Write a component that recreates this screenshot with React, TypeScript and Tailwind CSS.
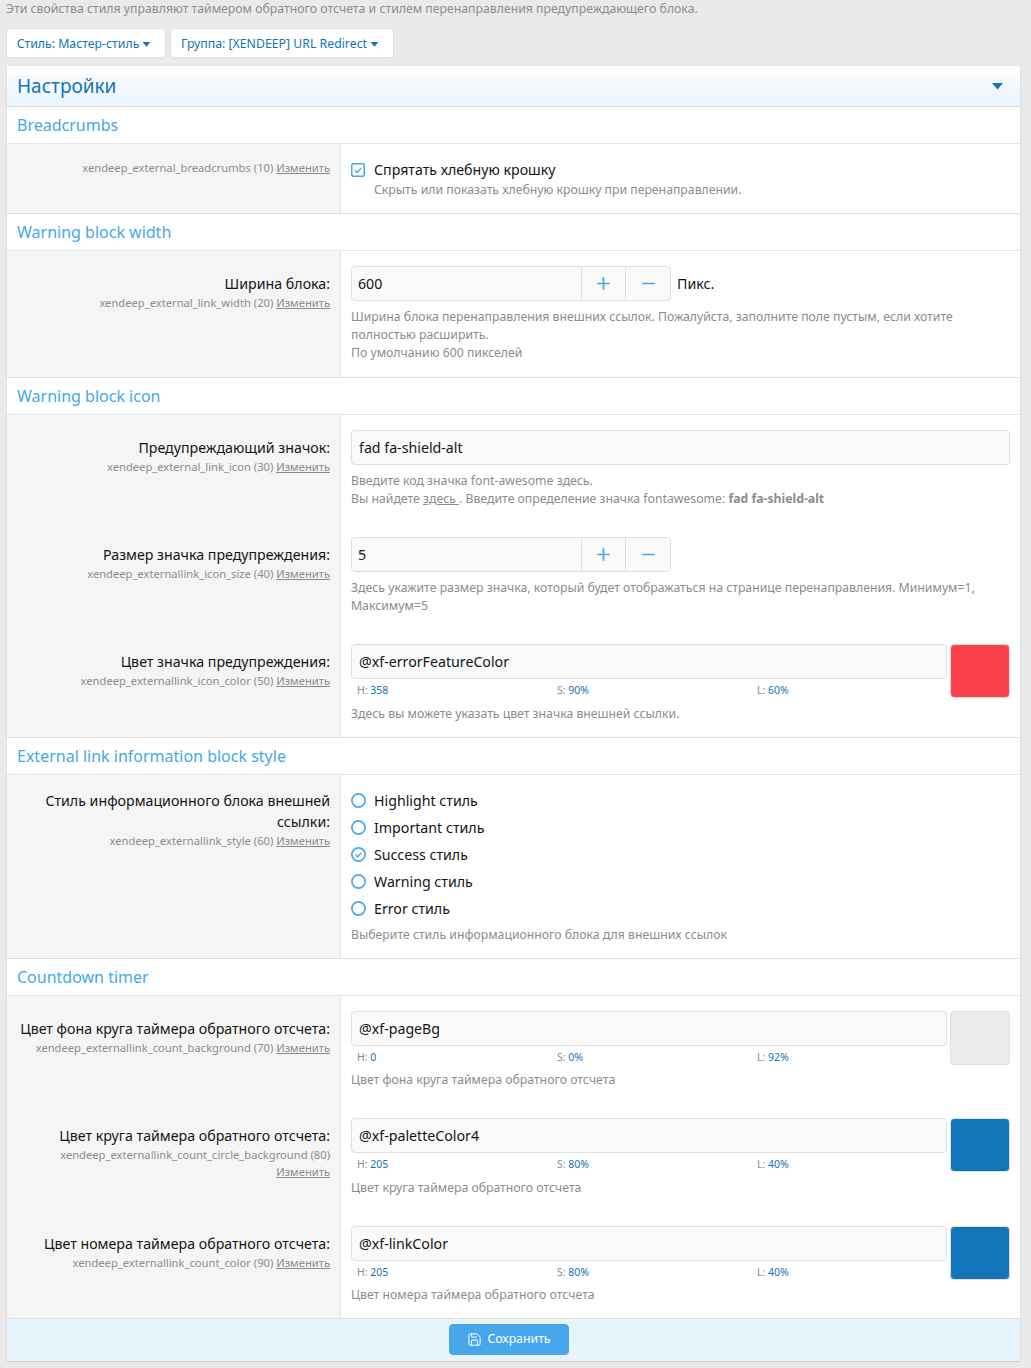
import { Minus, Plus, Save } from "lucide-react";

function Caret({ className }: { className: string }) {
  return (
    <svg viewBox="0 0 10 6" className={className} fill="currentColor">
      <path d="M0.3 0h9.4L5 5.6z" />
    </svg>
  );
}

function Heading({ children }: { children: string }) {
  return (
    <h3 className="h-[37px] border-b border-[#e6e6e6] bg-white pl-[10px] text-[16px] leading-[36px] text-[#47a7eb]">
      {children}
    </h3>
  );
}

function Hint({ name, order, wrap }: { name: string; order: number; wrap?: boolean }) {
  return (
    <div className="text-[11.2px] leading-[17px] text-[#8c8c8c]">
      {name} ({order}) {wrap && <br />}
      <a className="underline">Изменить</a>
    </div>
  );
}

function Row({
  label,
  name,
  order,
  wrap,
  pad = "pt-[22px]",
  children,
}: {
  label?: string;
  name: string;
  order: number;
  wrap?: boolean;
  pad?: string;
  children: React.ReactNode;
}) {
  return (
    <div className="grid grid-cols-[333px_minmax(0,1fr)]">
      <div className={`bg-[#f5f5f5] pr-[10px] text-right ${pad}`}>
        {label && <div className="text-[14.2px] leading-[21px] text-[#141414]">{label}</div>}
        <Hint name={name} order={order} wrap={wrap} />
      </div>
      <div className="border-l border-[#e6e6e6] bg-white pl-[10px] pr-[10px]">{children}</div>
    </div>
  );
}

function TextBox({ value, className }: { value: string; className?: string }) {
  return (
    <input
      readOnly
      value={value}
      className={`h-[35px] rounded-[4px] border border-[#dfdfdf] bg-[#fafafa] px-[7px] pb-[1px] text-[14.2px] text-[#141414] outline-none ${className}`}
    />
  );
}

function Spinner({ value, unit }: { value: string; unit?: string }) {
  return (
    <div className="flex items-center">
      <div className="flex h-[35px] w-[320px] rounded-[4px] border border-[#dfdfdf] bg-[#fafafa]">
        <input readOnly value={value} className="min-w-0 flex-1 bg-transparent px-[6px] text-[14.2px] text-[#141414] outline-none" />
        <button className="flex w-[44px] items-center justify-center border-l border-[#dfdfdf] text-[#47a7eb]">
          <Plus size={19} strokeWidth={2.2} />
        </button>
        <button className="flex w-[45px] items-center justify-center border-l border-[#dfdfdf] text-[#47a7eb]">
          <Minus size={19} strokeWidth={2.2} />
        </button>
      </div>
      {unit && <span className="ml-[6px] text-[14.2px] text-[#141414]">{unit}</span>}
    </div>
  );
}

function Desc({ children, className = "" }: { children: React.ReactNode; className?: string }) {
  return <div className={`text-[12.25px] leading-[18px] text-[#8c8c8c] ${className}`}>{children}</div>;
}

function ColorField({ value, swatch, h, s, l }: { value: string; swatch: string; h: string; s: string; l: string }) {
  return (
    <div className="flex gap-[3px]">
      <div className="min-w-0 flex-1">
        <TextBox value={value} className="w-full" />
        <div className="mt-[3px] grid grid-cols-[200px_200px_200px] pl-[6px] text-[10.5px] leading-[16px] text-[#8c8c8c]">
          <div>H: <span className="text-[#1474b8]">{h}</span></div>
          <div>S: <span className="text-[#1474b8]">{s}</span></div>
          <div>L: <span className="text-[#1474b8]">{l}</span></div>
        </div>
      </div>
      <div className={`h-[54px] w-[60px] rounded-[4px] border border-[#dfdfdf] ${swatch}`} />
    </div>
  );
}

function Radio({ label, checked }: { label: string; checked?: boolean }) {
  return (
    <div className="flex h-[27px] items-center gap-[8px] text-[14.2px] text-[#141414]">
      <svg viewBox="0 0 15 15" className="h-[15px] w-[15px] text-[#47a7eb]" fill="none" stroke="currentColor">
        <circle cx="7.5" cy="7.5" r="6.6" strokeWidth="1.7" />
        {checked && <path d="M4.5 7.6l2.1 2.1 3.9-4" strokeWidth="1.3" />}
      </svg>
      {label}
    </div>
  );
}

export default function App() {
  return (
    <div className="min-h-[1368px] bg-[#eaeaea] pb-[7px] pl-[6px] pr-[10px] font-['Noto_Sans',sans-serif]">
      <p className="pt-0 text-[12.27px] leading-[18px] text-[#8c8c8c]">
        Эти свойства стиля управляют таймером обратного отсчета и стилем перенаправления предупреждающего блока.
      </p>

      <div className="mt-[10px] flex gap-[4px]">
        <button className="flex h-[30px] w-[160px] items-center justify-center gap-[3px] rounded-[4px] border border-[#dfdfdf] bg-white pr-[4px] pt-[2px] text-[12.3px] text-[#1474b8]">
          Стиль: Мастер-стиль <Caret className="h-[5px] w-[9px]" />
        </button>
        <button className="flex h-[30px] w-[224px] items-center justify-center gap-[3px] rounded-[4px] border border-[#dfdfdf] bg-white pr-[4px] pt-[2px] text-[12.3px] text-[#1474b8]">
          Группа: [XENDEEP] URL Redirect <Caret className="h-[5px] w-[9px]" />
        </button>
      </div>

      <div className="mt-[7px] border-x border-[#dfdfdf]">
        <div className="flex h-[42px] items-center justify-between border-y border-t-[#e6e6e6] border-b-[#d8d8d8] bg-gradient-to-b from-white to-[#e8f4fc] pl-[10px] pr-[16px]">
          <h2 className="text-[19px] text-[#1474b8]">Настройки</h2>
          <Caret className="h-[7px] w-[13px] text-[#1474b8]" />
        </div>

        <Heading>Breadcrumbs</Heading>
        <div className="border-b border-[#dfdfdf]">
          <Row name="xendeep_external_breadcrumbs" order={10} pad="pt-[15px]">
            <div className="h-[69px] pt-[15px]">
              <div className="flex items-center gap-[9px] text-[14.2px] leading-[21px] text-[#141414]">
                <svg viewBox="0 0 14 14" className="h-[14px] w-[14px] text-[#47a7eb]" fill="none" stroke="currentColor">
                  <rect x="0.75" y="0.75" width="12.5" height="12.5" rx="1.5" strokeWidth="1.5" />
                  <path d="M3.8 7.2l2.3 2.3 4.2-4.6" strokeWidth="1.3" />
                </svg>
                Спрятать хлебную крошку
              </div>
              <Desc className="mt-[1px] pl-[23px]">Скрыть или показать хлебную крошку при перенаправлении.</Desc>
            </div>
          </Row>
        </div>

        <Heading>Warning block width</Heading>
        <div className="border-b border-[#dfdfdf]">
          <Row label="Ширина блока:" name="xendeep_external_link_width" order={20}>
            <div className="h-[126px] pt-[15px]">
              <Spinner value="600" unit="Пикс." />
              <Desc className="mt-[7px]">
                Ширина блока перенаправления внешних ссылок. Пожалуйста, заполните поле пустым, если хотите полностью расширить.
                <br />
                По умолчанию 600 пикселей
              </Desc>
            </div>
          </Row>
        </div>

        <Heading>Warning block icon</Heading>
        <div className="border-b border-[#dfdfdf]">
          <Row label="Предупреждающий значок:" name="xendeep_external_link_icon" order={30}>
            <div className="h-[107px] pt-[15px]">
              <TextBox value="fad fa-shield-alt" className="w-full" />
              <Desc className="mt-[7px]">
                Введите код значка font-awesome здесь.
                <br />
                Вы найдете <u>здесь </u>. Введите определение значка fontawesome: <b>fad fa-shield-alt</b>
              </Desc>
            </div>
          </Row>
          <Row label="Размер значка предупреждения:" name="xendeep_externallink_icon_size" order={40}>
            <div className="h-[107px] pt-[15px]">
              <Spinner value="5" />
              <Desc className="mt-[7px]">
                Здесь укажите размер значка, который будет отображаться на странице перенаправления. Минимум=1, Максимум=5
              </Desc>
            </div>
          </Row>
          <Row label="Цвет значка предупреждения:" name="xendeep_externallink_icon_color" order={50}>
            <div className="h-[108px] pt-[15px]">
              <ColorField value="@xf-errorFeatureColor" swatch="bg-[#fb404a]" h="358" s="90%" l="60%" />
              <Desc className="mt-[7px]">Здесь вы можете указать цвет значка внешней ссылки.</Desc>
            </div>
          </Row>
        </div>

        <Heading>External link information block style</Heading>
        <div className="border-b border-[#dfdfdf]">
          <Row label="Стиль информационного блока внешней ссылки:" name="xendeep_externallink_style" order={60} pad="pt-[15px]">
            <div className="h-[183px] pt-[12px]">
              <Radio label="Highlight стиль" />
              <Radio label="Important стиль" />
              <Radio label="Success стиль" checked />
              <Radio label="Warning стиль" />
              <Radio label="Error стиль" />
              <Desc className="mt-[4px]">Выберите стиль информационного блока для внешних ссылок</Desc>
            </div>
          </Row>
        </div>

        <Heading>Countdown timer</Heading>
        <div className="border-b border-[#dfdfdf]">
          <Row label="Цвет фона круга таймера обратного отсчета:" name="xendeep_externallink_count_background" order={70}>
            <div className="h-[107px] pt-[15px]">
              <ColorField value="@xf-pageBg" swatch="bg-[#ebebeb]" h="0" s="0%" l="92%" />
              <Desc className="mt-[6px]">Цвет фона круга таймера обратного отсчета</Desc>
            </div>
          </Row>
          <Row label="Цвет круга таймера обратного отсчета:" name="xendeep_externallink_count_circle_background" order={80} wrap>
            <div className="h-[108px] pt-[15px]">
              <ColorField value="@xf-paletteColor4" swatch="bg-[#1474b8]" h="205" s="80%" l="40%" />
              <Desc className="mt-[7px]">Цвет круга таймера обратного отсчета</Desc>
            </div>
          </Row>
          <Row label="Цвет номера таймера обратного отсчета:" name="xendeep_externallink_count_color" order={90}>
            <div className="h-[107px] pt-[15px]">
              <ColorField value="@xf-linkColor" swatch="bg-[#1474b8]" h="205" s="80%" l="40%" />
              <Desc className="mt-[6px]">Цвет номера таймера обратного отсчета</Desc>
            </div>
          </Row>
        </div>

        <div className="flex h-[43px] justify-center border-b border-[#d0d0d0] bg-[#e8f4fb] pr-[9px] pt-[5px]">
          <button className="flex h-[31px] w-[120px] items-center justify-center gap-[5px] rounded-[4px] border border-[#47a7eb] bg-[#47a7eb] text-[12.3px] text-white">
            <Save className="h-[15px] w-[15px]" strokeWidth={1.6} />
            Сохранить
          </button>
        </div>
      </div>
    </div>
  );
}
